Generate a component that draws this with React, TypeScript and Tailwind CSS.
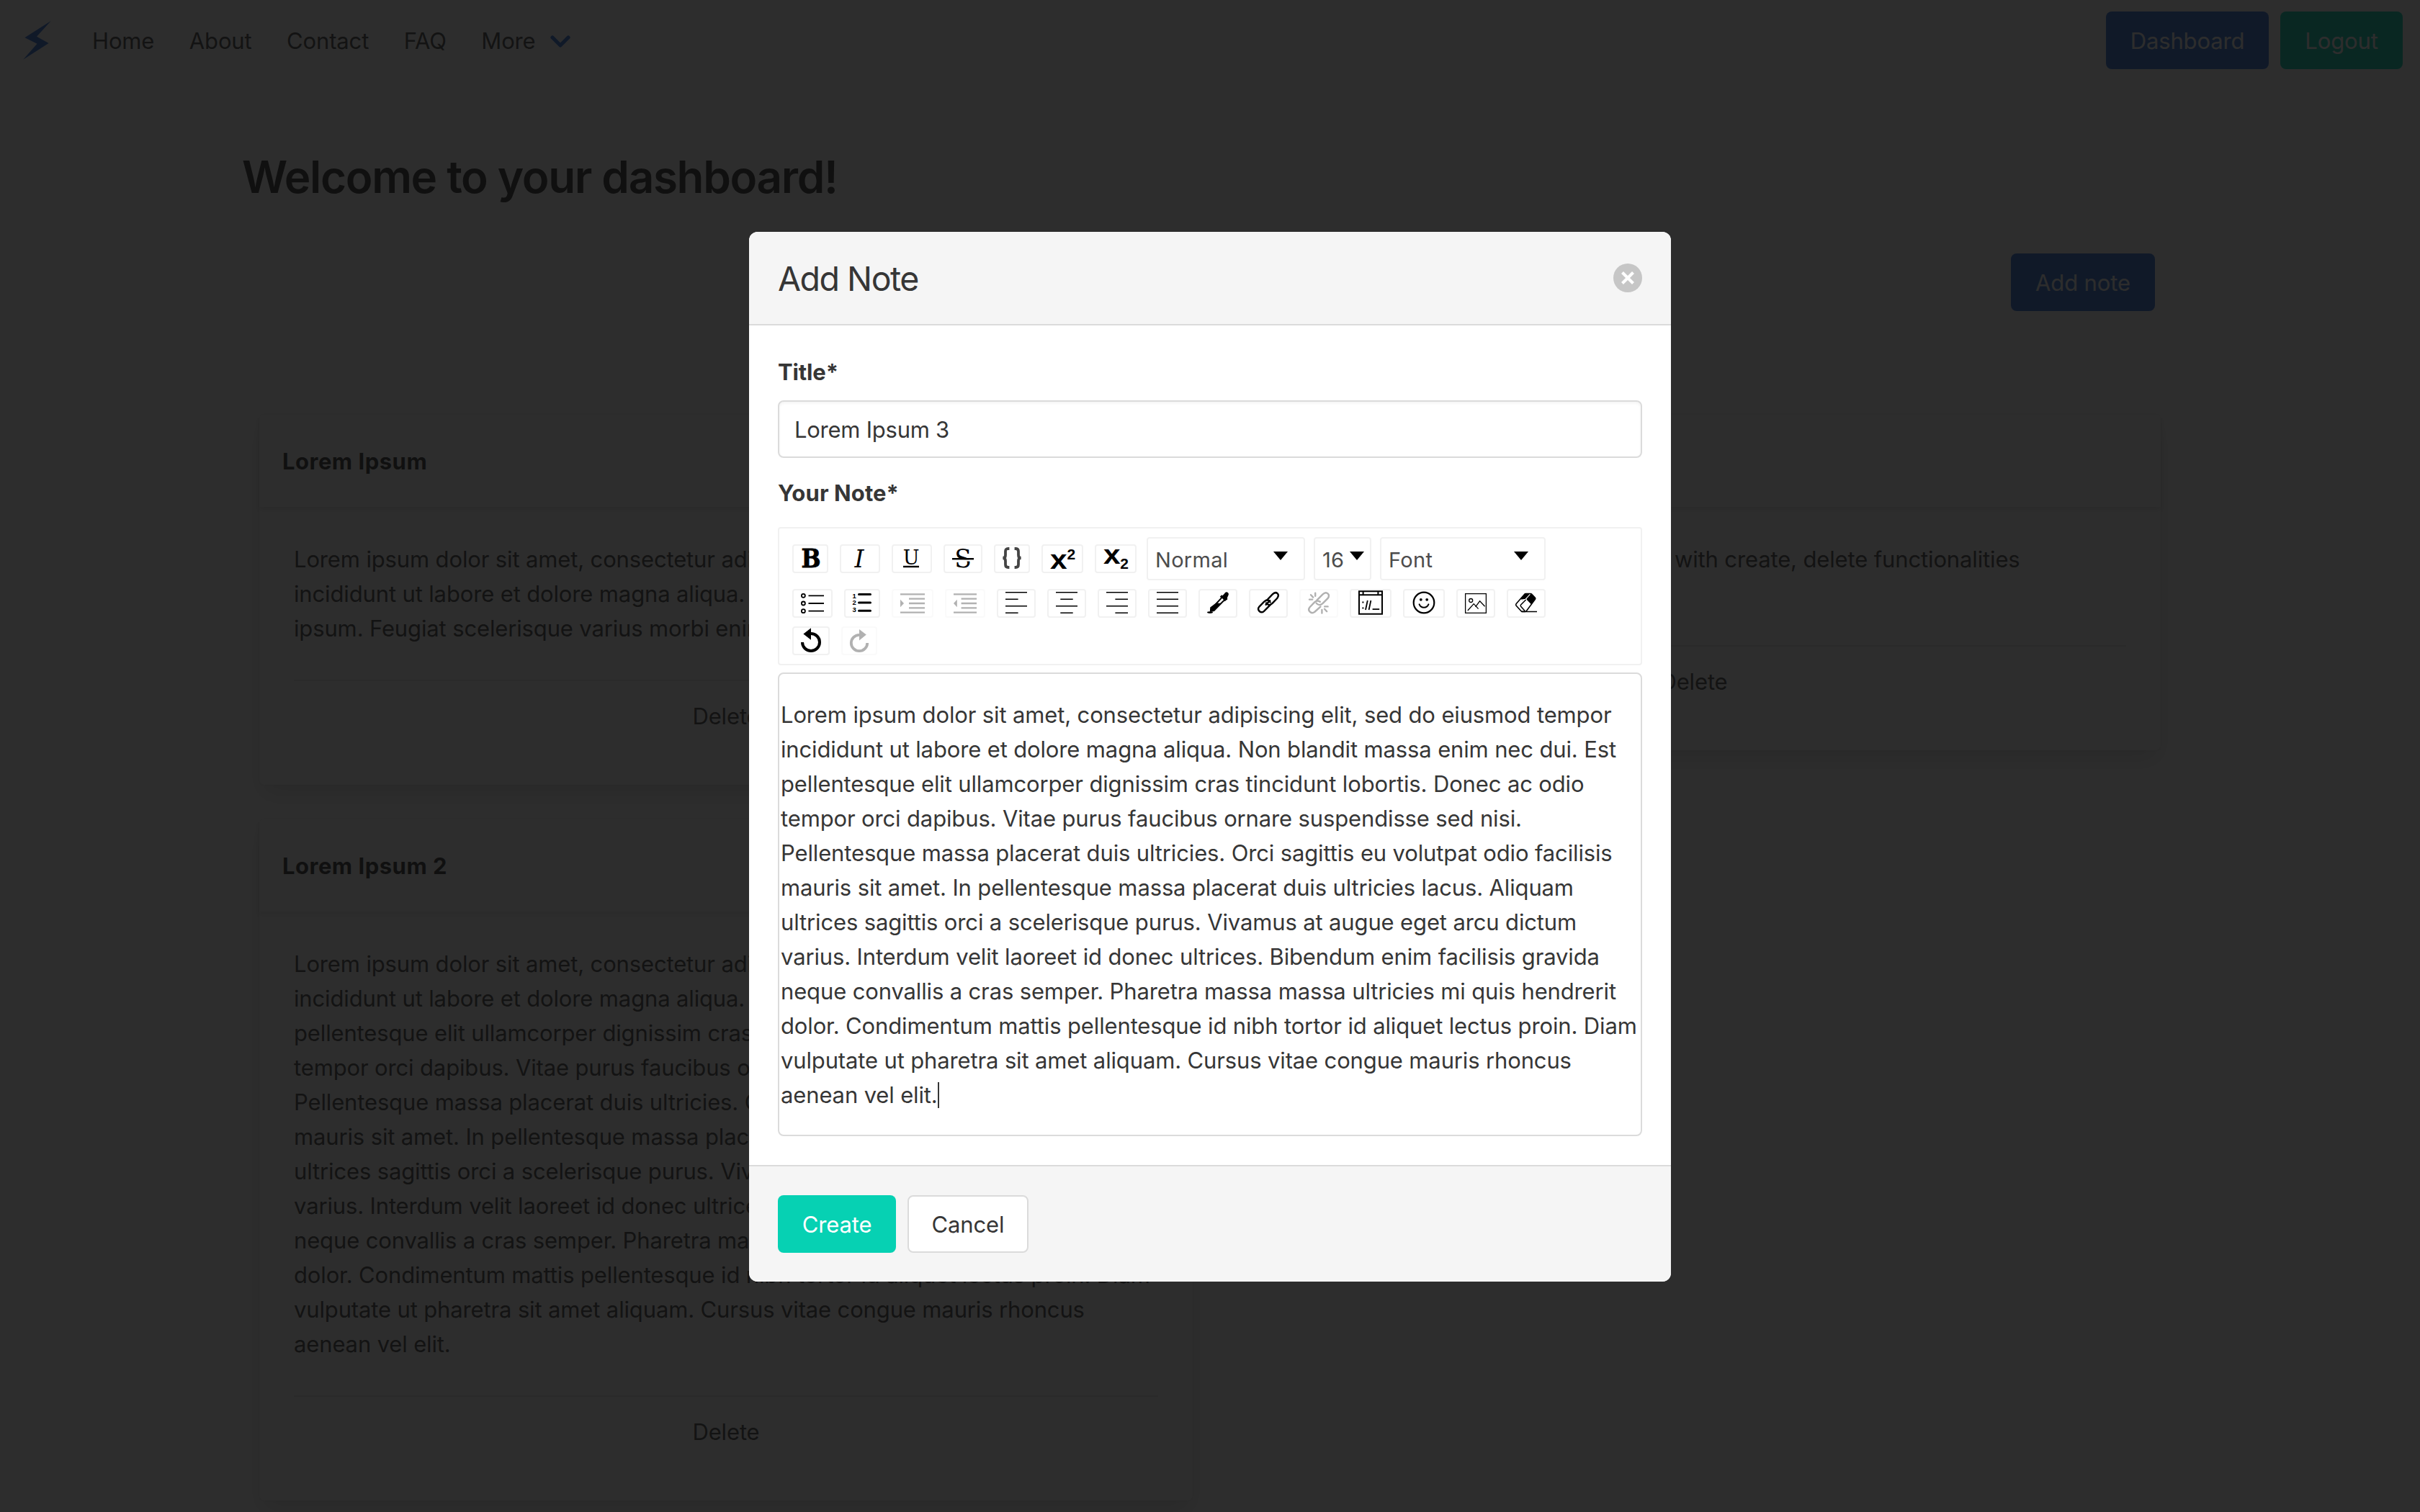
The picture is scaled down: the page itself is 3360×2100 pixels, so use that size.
import React, { useState } from 'react';
import type { ReactNode } from 'react';

type Note = {
  id: number;
  title: string;
  lines: string[];
};

type ToolbarButton = {
  name: string;
  width: string;
  icon: ReactNode;
  disabled?: boolean;
};

const longNote = [
  'Lorem ipsum dolor sit amet, consectetur adipiscing elit, sed do eiusmod tempor',
  'incididunt ut labore et dolore magna aliqua. Non blandit massa enim nec dui. Est',
  'pellentesque elit ullamcorper dignissim cras tincidunt lobortis. Donec ac odio',
  'tempor orci dapibus. Vitae purus faucibus ornare suspendisse sed nisi.',
  'Pellentesque massa placerat duis ultricies. Orci sagittis eu volutpat odio facilisis',
  'mauris sit amet. In pellentesque massa placerat duis ultricies lacus. Aliquam',
  'ultrices sagittis orci a scelerisque purus. Vivamus at augue eget arcu dictum',
  'varius. Interdum velit laoreet id donec ultrices. Bibendum enim facilisis gravida',
  'neque convallis a cras semper. Pharetra massa massa ultricies mi quis hendrerit',
  'dolor. Condimentum mattis pellentesque id nibh tortor id aliquet lectus proin. Diam',
  'vulputate ut pharetra sit amet aliquam. Cursus vitae congue mauris rhoncus',
  'aenean vel elit.',
];

const leftNotes: Note[] = [
  {
    id: 1,
    title: 'Lorem Ipsum',
    lines: [
      'Lorem ipsum dolor sit amet, consectetur adipiscing',
      'incididunt ut labore et dolore magna aliqua.',
      'ipsum. Feugiat scelerisque varius morbi enim',
    ],
  },
  { id: 2, title: 'Lorem Ipsum 2', lines: longNote },
];

const navLinks = ['Home', 'About', 'Contact', 'FAQ'];

const inlineButtons: ToolbarButton[] = [
  {
    name: 'Bold',
    width: 'w-[50px]',
    icon: (
      <text x="24" y="30" fontSize="35.5" fontWeight="700" fontFamily="DejaVu Serif" textAnchor="middle" textLength="27" lengthAdjust="spacingAndGlyphs" stroke="#000" strokeWidth="0.8">B</text>
    ),
  },
  {
    name: 'Italic',
    width: 'w-14',
    icon: <text x="25" y="30" fontSize="33" fontStyle="italic" fontFamily="DejaVu Serif" textAnchor="middle">I</text>,
  },
  {
    name: 'Underline',
    width: 'w-14',
    icon: (
      <>
        <text x="25" y="25.5" fontSize="27" fontFamily="DejaVu Serif" textAnchor="middle">U</text>
        <path d="M14 29h22" stroke="#000" strokeWidth="2.4" />
      </>
    ),
  },
  {
    name: 'Strikethrough',
    width: 'w-[54px]',
    icon: (
      <>
        <text x="25" y="30.3" fontSize="34.5" fontFamily="DejaVu Serif" textAnchor="middle">S</text>
        <path d="M10 20.4h30" stroke="#fff" strokeWidth="2.4" />
        <path d="M10 18.2h30" stroke="#000" strokeWidth="2.4" />
      </>
    ),
  },
  {
    name: 'Monospace',
    width: 'w-[50px]',
    icon: (
      <g fill="none" stroke="#444" strokeWidth="3.8">
        <path d="M19.4 4h-1.6c-2.8 0-3.8 1.4-3.8 4v5c0 2.6-1 4-3.6 4 2.6 0 3.6 1.4 3.6 4v5c0 2.6 1 4 3.8 4h1.6" />
        <path d="M26.6 4h1.6c2.8 0 3.8 1.4 3.8 4v5c0 2.6 1 4 3.6 4-2.6 0-3.6 1.4-3.6 4v5c0 2.6-1 4-3.8 4h-1.6" />
      </g>
    ),
  },
  {
    name: 'Superscript',
    width: 'w-[58px]',
    icon: (
      <g fontFamily="Liberation Sans" fontWeight="700">
        <text x="10" y="32.3" fontSize="36" textLength="23.4" lengthAdjust="spacingAndGlyphs">x</text>
        <text x="33.4" y="18.7" fontSize="21">2</text>
      </g>
    ),
  },
  {
    name: 'Subscript',
    width: 'w-[58px]',
    icon: (
      <g fontFamily="Liberation Sans" fontWeight="700">
        <text x="10" y="25.3" fontSize="37" textLength="23.4" lengthAdjust="spacingAndGlyphs">x</text>
        <text x="33.2" y="32.3" fontSize="21">2</text>
      </g>
    ),
  },
];

const blockButtons: ToolbarButton[] = [
  {
    name: 'Unordered list',
    width: 'w-14',
    icon: (
      <g fill="none" stroke="#000" strokeWidth="1.8">
        <circle cx="13.4" cy="7.3" r="2.5" />
        <circle cx="13.4" cy="18" r="2.5" />
        <circle cx="13.4" cy="28.7" r="2.5" />
        <path d="M20.5 7.3H42M20.5 18H42M20.5 28.7H42" />
      </g>
    ),
  },
  {
    name: 'Ordered list',
    width: 'w-[50px]',
    icon: (
      <g fontFamily="Liberation Sans" fontWeight="700" fontSize="9.5">
        <text x="9.5" y="10.5">1</text>
        <text x="9.5" y="20.3">2</text>
        <text x="9.5" y="30">3</text>
        <path d="M18.5 5.5h16M18.5 17h16M18.5 28.3h16" stroke="#000" strokeWidth="3" strokeLinecap="round" />
      </g>
    ),
  },
  {
    name: 'Indent',
    width: 'w-[58px]',
    disabled: true,
    icon: (
      <>
        <path d="M10 5.3h34M22 11.7h22M22 18h22M22 24.3h22M10 30.7h34" stroke="#000" strokeWidth="2.3" />
        <path d="M10 12.8 15 18l-5 5.2z" />
      </>
    ),
  },
  {
    name: 'Outdent',
    width: 'w-14',
    disabled: true,
    icon: (
      <>
        <path d="M10 5.3h32M20.6 11.7H42M20.6 18H42M20.6 24.3H42M10 30.7h32" stroke="#000" strokeWidth="2.3" />
        <path d="M14.8 12.8 10 18l4.8 5.2z" />
      </>
    ),
  },
  {
    name: 'Align left',
    width: 'w-[54px]',
    icon: <path d="M10 2.7h30M10 12.2h17.6M10 21.7h30M10 31.3h17.6" stroke="#000" strokeWidth="1.6" />,
  },
  {
    name: 'Align center',
    width: 'w-[54px]',
    icon: <path d="M10 2.7h30M16.3 12.2h17.4M10 21.7h30M16.3 31.3h17.4" stroke="#000" strokeWidth="1.6" />,
  },
  {
    name: 'Align right',
    width: 'w-[54px]',
    icon: <path d="M10 2.7h30M22.4 12.2H40M10 21.7h30M22.4 31.3H40" stroke="#000" strokeWidth="1.6" />,
  },
  {
    name: 'Justify',
    width: 'w-[54px]',
    icon: <path d="M10 2.7h30M10 12.2h30M10 21.7h30M10 31.3h30" stroke="#000" strokeWidth="1.6" />,
  },
  {
    name: 'Color picker',
    width: 'w-[54px]',
    icon: (
      <>
        <path d="M30.5 8.2 34 4.6c1.2-2 2.6-2.5 3.8-2.1 2 .5 2.6 2.6 1.6 4.6l-1.4 3 .2 2.6-3.2 1z" />
        <path d="M29 7.5 36 14" stroke="#000" strokeWidth="3.6" />
        <path d="m31 9.4-14 14.8-1.6 4.4 3.8-.6 15-14.8z" fill="#fff" stroke="#000" strokeWidth="2" />
        <path d="m22.4 17.4 8 .6-10.6 11-6 .4.5-6z" />
        <ellipse cx="14" cy="30.6" rx="4" ry="1.3" />
      </>
    ),
  },
  {
    name: 'Link',
    width: 'w-[54px]',
    icon: (
      <g fill="none" stroke="#000" strokeWidth="2.4" strokeLinecap="round">
        <path d="M22.6 14 30.8 5.4c5.2-5.2 10.6.2 6.4 5.6l-6.6 6.8c-3.6 3.4-6.6 2.8-8.6-.4" />
        <path d="M27.4 20.4 19 28.8c-4.4 4-10.4-1.4-6.6-6.2l6.8-7c3.6-3.2 7-2.6 8.4.8" />
        <path d="m21.6 19.8 5.6-5.6" />
      </g>
    ),
  },
  {
    name: 'Unlink',
    width: 'w-[54px]',
    disabled: true,
    icon: (
      <g fill="none" stroke="#000" strokeWidth="2.4" strokeLinecap="round">
        <path d="M22.4 13.6 30.6 5.4c5.2-5.2 11 .4 6.8 5.8l-7 7c-3 2.8-6.4 2.6-8.8-.6" />
        <path d="M27.4 22.6 19.2 30c-4.8 3.4-10.4-2-6.6-6.8l6.8-7c2.4-2.2 5.4-2 7.4-.4" />
        <path d="M20.2 3.6v4.2M14 6.2l3.2 3.4M12 12.6h4.2M29.4 27v4.6M33 25.8l3.2 3.4M33.2 22.4h4.4" />
      </g>
    ),
  },
  {
    name: 'Embedded',
    width: 'w-[58px]',
    icon: (
      <>
        <path d="M11 1.2h32v31.6H11zM11 6.3h32M16.6 1v5.3M37.4 1v5.3" fill="none" stroke="#000" strokeWidth="2" />
        <path d="M15.4 15.6h2v2h-2zM15.4 23.6h2v2h-2z" />
        <path d="m20 27 2.8-13M24.6 27l2.8-13M29.6 26.2h9.6" stroke="#000" strokeWidth="1.8" />
      </>
    ),
  },
  {
    name: 'Emoji',
    width: 'w-[58px]',
    icon: (
      <>
        <circle cx="27" cy="17" r="14.3" fill="none" stroke="#000" strokeWidth="2.2" />
        <circle cx="22.8" cy="12.8" r="1.9" />
        <circle cx="31.2" cy="12.8" r="1.9" />
        <path d="M20.6 19.4c2.4 5.8 10.4 5.8 12.8 0" fill="none" stroke="#000" strokeWidth="2" strokeLinecap="round" />
      </>
    ),
  },
  {
    name: 'Image',
    width: 'w-[54px]',
    icon: (
      <g fill="none" stroke="#000" strokeWidth="1.3">
        <path d="M10.6 4.6h28.8v26.8H10.6z" />
        <circle cx="18.2" cy="14" r="2.5" />
        <path d="m13.8 28 8.4-9.4 6.4 7M24.6 22.8l6-8 7 7.4" />
      </g>
    ),
  },
  {
    name: 'Eraser',
    width: 'w-[54px]',
    icon: (
      <>
        <path d="M24.4 4.6h6.4c1 0 1.6.3 2.2 1l4.4 4.6c.6.8.5 1.5 0 2.2L25.4 28.6c-.5.6-1 .8-1.8.8h-3.8c-.9 0-1.5-.3-2-.9L11 21c-.5-.8-.4-1.6.2-2.4L22.6 5.4c.5-.6 1-.8 1.8-.8z" fill="#fff" stroke="#000" strokeWidth="1.6" />
        <path d="M23 4.4h8.6L38 11.6l-5.8 7.8-6.6-6.6-2.2-.4-3.8 1-2.4-1.4z" />
        <path d="M30.4 5.4 17.8 19.2c-.7.8-.7 1.4 0 2.2l5.4 7M25.6 12.4l-7.2.6" fill="none" stroke="#fff" strokeWidth="1.2" />
        <path d="m24.6 13-7 7c-.7.8-.7 1.4 0 2.2l5.6 6.4M18.4 29.6H40" fill="none" stroke="#000" strokeWidth="1.5" />
      </>
    ),
  },
];

const historyButtons: ToolbarButton[] = [
  {
    name: 'Undo',
    width: 'w-[52px]',
    icon: (
      <>
        <path d="M12 20a12 12 0 1 0 12-12" fill="none" stroke="#000" strokeWidth="4" />
        <path d="M24 .3v16.4l-10.6-8.2z" />
      </>
    ),
  },
  {
    name: 'Redo',
    width: 'w-[50px]',
    disabled: true,
    icon: (
      <>
        <path d="M34.2 21A11.2 11.2 0 1 1 23 9.8" fill="none" stroke="#000" strokeWidth="3.8" />
        <path d="M23 2v15.4l9.8-7.8z" />
      </>
    ),
  },
];

function ToolbarGroup({ buttons }: { buttons: ToolbarButton[] }) {
  return (
    <div className="flex gap-4">
      {buttons.map((button) => (
        <button
          key={button.name}
          aria-label={button.name}
          disabled={button.disabled}
          className={`${button.width} h-10 flex-shrink-0 border-2 border-[#f1f1f1] rounded-[4px] bg-white ${
            button.disabled ? 'opacity-30' : ''
          }`}
        >
          <svg className="block w-full h-9 overflow-visible">{button.icon}</svg>
        </button>
      ))}
    </div>
  );
}

function ToolbarSelect({ label, className, caret }: { label: string; className: string; caret: string }) {
  return (
    <div className={`${className} h-[60px] flex justify-between border-2 border-[#f1f1f1] rounded-[4px] text-[29px] leading-[60px] tracking-[0.3px] text-[#4c4c4c]`}>
      <span className="pl-[10px]">{label}</span>
      <svg className={`${caret} mt-[18px] w-5 h-3`} viewBox="0 0 20 12">
        <path d="M0 0h20L10 12z" fill="#000" />
      </svg>
    </div>
  );
}

function NoteCard({ title, children }: { title?: string; children: ReactNode }) {
  return (
    <div className="w-[1296px] rounded-[8px] bg-white shadow-[0_16px_32px_-4px_rgba(10,10,10,0.13),0_0_0_2px_rgba(10,10,10,0.02)]">
      <header className="h-32 px-8 pt-[41px] shadow-[0_4px_8px_rgba(10,10,10,0.1)] font-bold text-[#363636] leading-[48px] tracking-[0.5px]">
        {title}
      </header>
      <div className="px-12 pt-[49px] pb-[71px]">
        {children}
        <footer className="mt-[47px] pt-[25px] border-t-2 border-[#e6e6e6] text-center">Delete</footer>
      </div>
    </div>
  );
}

function Navbar() {
  return (
    <nav className="h-28 flex items-center justify-between pr-6">
      <div className="pt-[2px] flex items-center">
        <svg className="ml-[31px] mb-[2px] mr-[55px] w-[42px] h-[56px]" viewBox="32 28 42 56">
          <path d="M71.8 29 35.4 52.3l17.1 8.4-19.3 22L68.6 60 52 50.7z" fill="#3273dc" />
        </svg>
        {navLinks.map((link) => (
          <a key={link} className="mr-[48.5px]">{link}</a>
        ))}
        <a className="flex items-center gap-[20px]">
          More
          <svg className="w-[28px] h-[20px]" viewBox="0 0 28 20" fill="none">
            <path d="m3 5 11 11L25 5" stroke="#3273dc" strokeWidth="5.2" strokeLinecap="round" strokeLinejoin="round" />
          </svg>
        </a>
      </div>
      <div className="flex gap-4 text-white">
        <button className="w-[226px] h-20 pt-[2px] rounded-[8px] bg-[#3273dc]">Dashboard</button>
        <button className="w-[170px] h-20 pt-[2px] rounded-[8px] bg-[#06d1b3]">Logout</button>
      </div>
    </nav>
  );
}

function AddNoteModal({ onClose }: { onClose: () => void }) {
  const [title, setTitle] = useState('Lorem Ipsum 3');

  return (
    <div className="w-[1280px] rounded-[12px] overflow-hidden bg-white text-[#363636]">
      <header className="h-[130px] px-10 flex items-center justify-between bg-[#f5f5f5] border-b-2 border-[#dbdbdb]">
        <p className="pt-[2px] text-[46.5px] leading-[48px] tracking-[-1.5px]">Add Note</p>
        <button aria-label="close" onClick={onClose} className="w-10 h-10 rounded-full bg-[#c6c6c6]">
          <svg viewBox="0 0 40 40">
            <path d="m12.5 12.5 15 15m0-15-15 15" stroke="#fff" strokeWidth="4.2" />
          </svg>
        </button>
      </header>

      <section className="px-10 pb-10 pt-[41px]">
        <label className="block font-bold leading-[48px]">Title*</label>
        <input
          value={title}
          onChange={(e) => setTitle(e.target.value)}
          className="block mt-[15px] w-full h-20 px-[21px] border-2 border-[#dbdbdb] rounded-[8px] shadow-[inset_0_2px_4px_rgba(10,10,10,0.05)] outline-none tracking-[-0.25px]"
        />
        <label className="block mt-[25px] font-bold leading-[48px] tracking-[0.1px]">Your Note*</label>

        <div className="mt-[23px] h-48 px-[18px] pt-3 border-2 border-[#f1f1f1] rounded-[4px]">
          <div className="flex items-start">
            <div className="pt-[10px]">
              <ToolbarGroup buttons={inlineButtons} />
            </div>
            <div className="ml-[14px] flex gap-3">
              <ToolbarSelect label="Normal" className="w-[220px]" caret="mr-[22px]" />
              <ToolbarSelect label="16" className="w-20" caret="mr-2" />
              <ToolbarSelect label="Font" className="w-[230px]" caret="mr-[22px]" />
            </div>
          </div>
          <div className="mt-3">
            <ToolbarGroup buttons={blockButtons} />
          </div>
          <div className="mt-3">
            <ToolbarGroup buttons={historyButtons} />
          </div>
        </div>

        <div className="mt-[10px] pt-[33px] pb-[31px] pl-[2px] border-2 border-[#dbdbdb] rounded-[8px]">
          {longNote.map((line, i) => (
            <div key={line} className="flex items-center h-12 whitespace-nowrap">
              {line}
              {i === longNote.length - 1 && <span className="w-[2px] h-9 bg-[#363636]" />}
            </div>
          ))}
        </div>
      </section>

      <footer className="p-10 flex gap-4 bg-[#f5f5f5] border-t-2 border-[#dbdbdb]">
        <button className="w-[164px] h-20 pt-[2px] rounded-[8px] bg-[#06d1b3] text-white">Create</button>
        <button onClick={onClose} className="w-[168px] h-20 pt-[2px] rounded-[8px] border-2 border-[#dbdbdb] bg-white">Cancel</button>
      </footer>
    </div>
  );
}

export default function App() {
  const [isOpen, setIsOpen] = useState(true);

  return (
    <div className="relative w-[3360px] h-[2100px] overflow-hidden bg-white font-['Inter',sans-serif] text-[31px] leading-[48px] tracking-[-0.14px] text-[#4a4a4a]">
      <Navbar />

      <main className="w-[2688px] mx-auto">
        <h1 className="pt-[98px] text-[62px] font-semibold leading-[72px] tracking-[-1.35px] text-[#363636]">
          Welcome to your dashboard!
        </h1>
        <div className="mt-[70px] flex justify-end">
          <button onClick={() => setIsOpen(true)} className="mr-8 w-[200px] h-20 pt-[2px] rounded-[8px] bg-[#3273dc] text-white">
            Add note
          </button>
        </div>

        <div className="mt-36 px-6 flex items-start gap-12">
          <div className="flex flex-col gap-12">
            {leftNotes.map((note) => (
              <NoteCard key={note.id} title={note.title}>
                {note.lines.map((line) => (
                  <p key={line} className="whitespace-nowrap">{line}</p>
                ))}
              </NoteCard>
            ))}
          </div>
          <NoteCard>
            <p className="h-24 pl-[573px] whitespace-nowrap">with create, delete functionalities</p>
          </NoteCard>
        </div>
      </main>

      {isOpen && (
        <div className="absolute inset-0 flex items-start justify-center pt-[322px] bg-[rgba(10,10,10,0.86)]">
          <AddNoteModal onClose={() => setIsOpen(false)} />
        </div>
      )}
    </div>
  );
}
